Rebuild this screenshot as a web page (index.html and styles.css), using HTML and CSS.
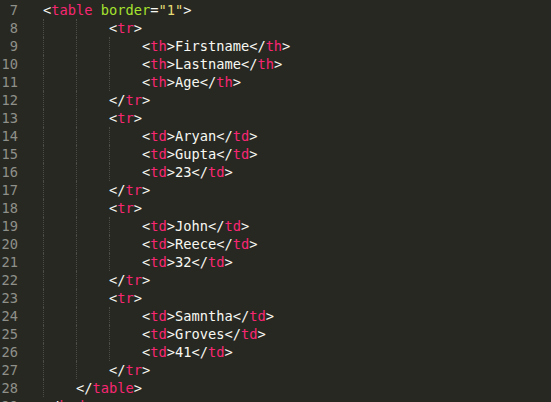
FILE: index.html
```html
<!DOCTYPE html>
<html>
<head>
<meta charset="utf-8">
<link rel="stylesheet" href="styles.css">
</head>
<body>
<div class="editor">
  <div class="row"><span class="ln">7</span><span class="code">&lt;<span class="t">table</span> <span class="a">border</span>=<span class="s">"1"</span>&gt;</span></div>
  <div class="row"><span class="ln">8</span><span class="code"><i class="g"></i><i class="g"></i>&lt;<span class="t">tr</span>&gt;</span></div>
  <div class="row"><span class="ln">9</span><span class="code"><i class="g"></i><i class="g"></i><i class="g"></i>&lt;<span class="t">th</span>&gt;Firstname&lt;/<span class="t">th</span>&gt;</span></div>
  <div class="row"><span class="ln">10</span><span class="code"><i class="g"></i><i class="g"></i><i class="g"></i>&lt;<span class="t">th</span>&gt;Lastname&lt;/<span class="t">th</span>&gt;</span></div>
  <div class="row"><span class="ln">11</span><span class="code"><i class="g"></i><i class="g"></i><i class="g"></i>&lt;<span class="t">th</span>&gt;Age&lt;/<span class="t">th</span>&gt;</span></div>
  <div class="row"><span class="ln">12</span><span class="code"><i class="g"></i><i class="g"></i>&lt;/<span class="t">tr</span>&gt;</span></div>
  <div class="row"><span class="ln">13</span><span class="code"><i class="g"></i><i class="g"></i>&lt;<span class="t">tr</span>&gt;</span></div>
  <div class="row"><span class="ln">14</span><span class="code"><i class="g"></i><i class="g"></i><i class="g"></i>&lt;<span class="t">td</span>&gt;Aryan&lt;/<span class="t">td</span>&gt;</span></div>
  <div class="row"><span class="ln">15</span><span class="code"><i class="g"></i><i class="g"></i><i class="g"></i>&lt;<span class="t">td</span>&gt;Gupta&lt;/<span class="t">td</span>&gt;</span></div>
  <div class="row"><span class="ln">16</span><span class="code"><i class="g"></i><i class="g"></i><i class="g"></i>&lt;<span class="t">td</span>&gt;23&lt;/<span class="t">td</span>&gt;</span></div>
  <div class="row"><span class="ln">17</span><span class="code"><i class="g"></i><i class="g"></i>&lt;/<span class="t">tr</span>&gt;</span></div>
  <div class="row"><span class="ln">18</span><span class="code"><i class="g"></i><i class="g"></i>&lt;<span class="t">tr</span>&gt;</span></div>
  <div class="row"><span class="ln">19</span><span class="code"><i class="g"></i><i class="g"></i><i class="g"></i>&lt;<span class="t">td</span>&gt;John&lt;/<span class="t">td</span>&gt;</span></div>
  <div class="row"><span class="ln">20</span><span class="code"><i class="g"></i><i class="g"></i><i class="g"></i>&lt;<span class="t">td</span>&gt;Reece&lt;/<span class="t">td</span>&gt;</span></div>
  <div class="row"><span class="ln">21</span><span class="code"><i class="g"></i><i class="g"></i><i class="g"></i>&lt;<span class="t">td</span>&gt;32&lt;/<span class="t">td</span>&gt;</span></div>
  <div class="row"><span class="ln">22</span><span class="code"><i class="g"></i><i class="g"></i>&lt;/<span class="t">tr</span>&gt;</span></div>
  <div class="row"><span class="ln">23</span><span class="code"><i class="g"></i><i class="g"></i>&lt;<span class="t">tr</span>&gt;</span></div>
  <div class="row"><span class="ln">24</span><span class="code"><i class="g"></i><i class="g"></i><i class="g"></i>&lt;<span class="t">td</span>&gt;Samntha&lt;/<span class="t">td</span>&gt;</span></div>
  <div class="row"><span class="ln">25</span><span class="code"><i class="g"></i><i class="g"></i><i class="g"></i>&lt;<span class="t">td</span>&gt;Groves&lt;/<span class="t">td</span>&gt;</span></div>
  <div class="row"><span class="ln">26</span><span class="code"><i class="g"></i><i class="g"></i><i class="g"></i>&lt;<span class="t">td</span>&gt;41&lt;/<span class="t">td</span>&gt;</span></div>
  <div class="row"><span class="ln">27</span><span class="code"><i class="g"></i><i class="g"></i>&lt;/<span class="t">tr</span>&gt;</span></div>
  <div class="row"><span class="ln">28</span><span class="code"><i class="g"></i>&lt;/<span class="t">table</span>&gt;</span></div>
  <div class="row"><span class="ln">29</span><span class="code">&lt;/<span class="t">body</span>&gt;</span></div>
</div>
</body>
</html>
```
FILE: styles.css
```css
html, body {
  margin: 0;
  padding: 0;
  background: #272822;
  height: 100%;
  overflow: hidden;
}
.editor {
  padding-top: 1px;
  font-family: "DejaVu Sans Mono", "Liberation Mono", monospace;
  font-size: 13.7px;
  line-height: 18px;
  color: #F8F8F2;
}
.row {
  display: flex;
  height: 18px;
  white-space: pre;
}
.ln {
  width: 18px;
  text-align: right;
  margin-right: 25px;
  color: #8F908A;
  flex: none;
}
.code {
  display: block;
}
.g {
  display: inline-block;
  vertical-align: top;
  width: 33px;
  height: 18px;
  box-sizing: border-box;
  border-left: 1px dotted #4B4C45;
}
.t { color: #F92672; }
.a { color: #A6E22E; }
.s { color: #E6DB74; }
```
